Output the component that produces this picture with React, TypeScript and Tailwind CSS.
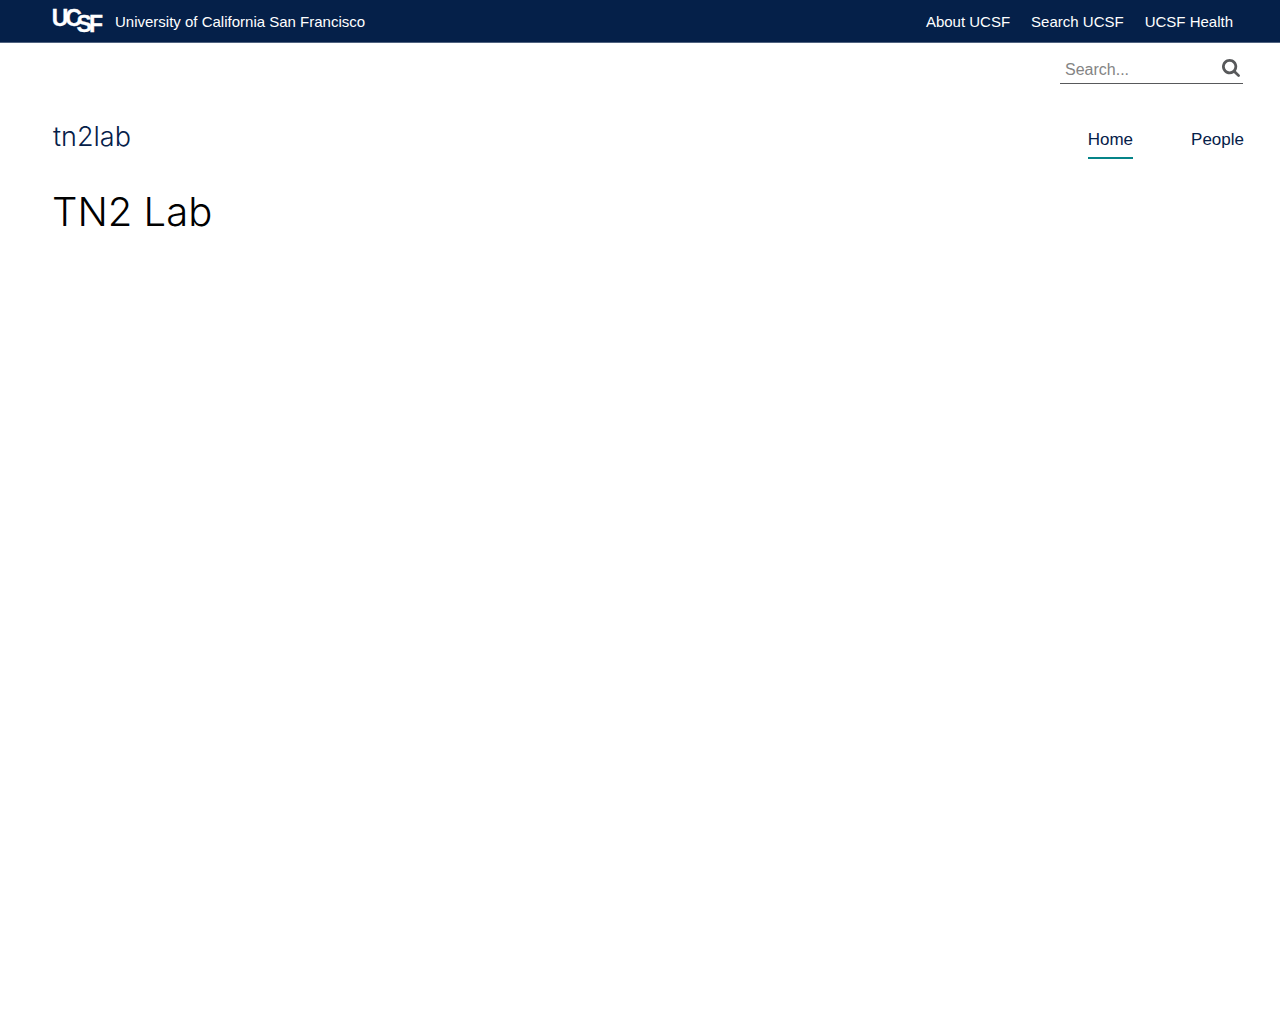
const topLinks = ["About UCSF", "Search UCSF", "UCSF Health"];

const navItems = [
  { label: "Home", active: true },
  { label: "People", active: false },
];

function Logo() {
  return (
    <svg
      className="h-8 w-[54px]"
      viewBox="0 0 54 32"
      fill="#fff"
      stroke="#fff"
      strokeWidth="0.3"
      fontFamily="'Liberation Sans', Arial, sans-serif"
      fontWeight="700"
      fontSize="23"
      role="img"
      aria-label="UCSF"
    >
      <text x="0.8 14.2 25.5 38" y="20.5 20.5 26.8 26.8">
        UCSF
      </text>
    </svg>
  );
}

function SearchIcon() {
  return (
    <svg className="size-[18px]" viewBox="0 0 1664 1664" fill="currentColor">
      <path
        fillRule="evenodd"
        d="M1152 704q0 185-131.5 316.5T704 1152t-316.5-131.5T256 704t131.5-316.5T704 256t316.5 131.5T1152 704zm512 832q0 52-38 90t-90 38q-54 0-90-38l-343-342q-179 124-399 124-143 0-273.5-55.5t-225-150-150-225T0 704t55.5-273.5 150-225 225-150T704 0t273.5 55.5 225 150 150 225T1408 704q0 220-124 399l343 343q37 37 37 90z"
      />
    </svg>
  );
}

function TopBar() {
  return (
    <div className="flex items-start justify-between border-b border-[#506380] bg-[#052049] pl-[51px] pr-[47px] text-[15px] leading-[22px] text-white">
      <div className="flex gap-[10px] py-[5px]">
        <Logo />
        <a href="#" className="pt-[6px]">
          University of California San Francisco
        </a>
      </div>
      <ul className="flex gap-[21px] pt-[11px]">
        {topLinks.map((link) => (
          <li key={link}>
            <a href="#">{link}</a>
          </li>
        ))}
      </ul>
    </div>
  );
}

function SearchForm() {
  return (
    <form className="flex w-[183px] items-start border-b border-[#58595b]">
      <label htmlFor="search" className="sr-only">
        Search
      </label>
      <input
        id="search"
        type="text"
        placeholder="Search..."
        className="h-7 min-w-0 flex-1 pl-[5px] pt-[2px] text-base outline-none placeholder:text-[#848484]"
      />
      <button type="submit" aria-label="Search" className="px-[3px] pt-1 text-[#58595b]">
        <SearchIcon />
      </button>
    </form>
  );
}

export default function App() {
  return (
    <div className="min-h-screen bg-white font-['Liberation_Sans',Arial,sans-serif] text-black">
      <TopBar />
      <header className="pl-[53px] pr-9">
        <div className="flex justify-end pr-px pt-3">
          <SearchForm />
        </div>
        <div className="flex items-start justify-between pt-8 text-[#052049]">
          <a
            href="#"
            className="font-['Inter',sans-serif] text-[27px] font-light leading-[42px]"
          >
            tn2lab
          </a>
          <nav className="pt-3">
            <ul className="flex gap-[58px] text-[17px] leading-6">
              {navItems.map((item) => (
                <li key={item.label}>
                  <a
                    href="#"
                    className={
                      item.active
                        ? "block border-b-2 border-[#058488] pb-[5px]"
                        : "block border-b-2 border-transparent pb-[5px]"
                    }
                  >
                    {item.label}
                  </a>
                </li>
              ))}
            </ul>
          </nav>
        </div>
      </header>
      <main className="px-[52px] pt-7">
        <h1 className="font-['Inter',sans-serif] text-[40px] font-light leading-[50px]">
          TN2 Lab
        </h1>
      </main>
    </div>
  );
}
